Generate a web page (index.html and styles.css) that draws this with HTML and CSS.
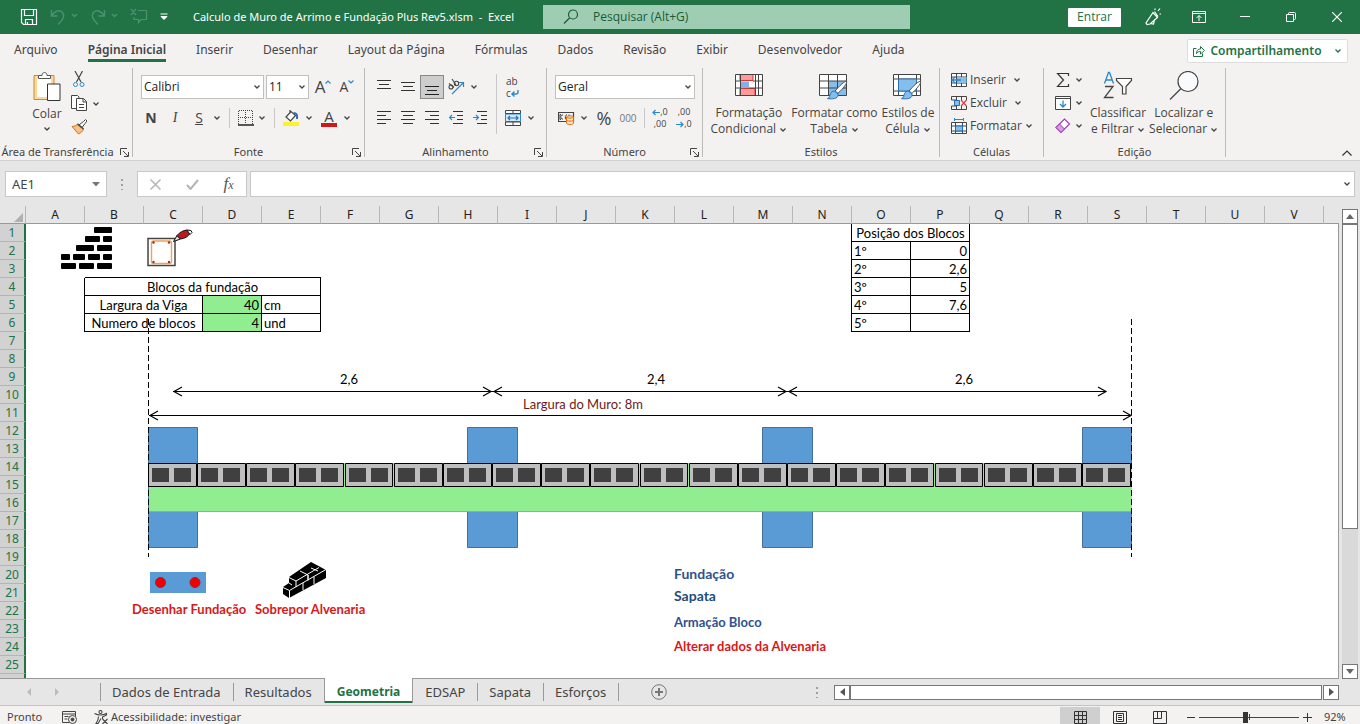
FILE: index.html
```html
<!DOCTYPE html>
<html lang="pt-BR">
<head>
<meta charset="utf-8">
<title>Calculo de Muro de Arrimo e Fundação Plus Rev5.xlsm - Excel</title>
<link rel="stylesheet" href="styles.css">
</head>
<body>
<svg class="defs" aria-hidden="true">
  <symbol id="chev" viewBox="0 0 8 6"><path d="M1.5 1.5 4 4l2.5-2.5" fill="none" stroke="currentColor" stroke-width="1.3"/></symbol>
  <symbol id="launch" viewBox="0 0 9 9"><path d="M.5 7V.5H7M3 3l5 5M8.500 4v4.500H4" fill="none" stroke="currentColor"/></symbol>
  <symbol id="brush" viewBox="0 0 24 22"><path d="M21.500 1.500c1.500 1-5 9-9 12.500l-3-2.500C14 6 20 .5 21.500 1.500z" fill="#fff" stroke="#444"/><path d="M8.500 11.500l4 3c1 4-3 6-11 5 3-1 2-3 3-5 1-2 2.500-3 4-3z" fill="#83beec" stroke="#1e6fb8"/></symbol>
  <symbol id="brick" viewBox="0 0 49 24"><path d="M.5.5h48v23H.5z" fill="#bfbfbf" stroke="#000"/><path d="M4 5h17v14H4zM26 5h17v14H26z" fill="#404040"/></symbol>
  <symbol id="brick-s" viewBox="0 0 48 24"><path d="M.5.5h47v23H.5z" fill="#bfbfbf" stroke="#000"/><path d="M4 5h17v14H4zM26 5h17v14H26z" fill="#404040"/></symbol>
</svg>

<header class="titlebar">
  <div class="quick">
    <button aria-label="Salvar"><svg width="18" height="18" viewBox="0 0 18 18" fill="none" stroke="#fff" stroke-width="1.200"><path d="M1.500 1.500h15v15h-13l-2-2zM4.500 1.500v6h9v-6M5.500 16.500v-5h7v5M7.500 14v2.500"/></svg></button>
    <button class="dim" aria-label="Desfazer"><svg width="28" height="18" viewBox="0 0 28 18" fill="none" stroke="currentColor" stroke-width="1.400"><path d="M1.500 2v6h6M1.500 8C4 3.500 9 1 12.500 4.500c3 3.500 1 7-4.500 12"/><path d="m22 6 2.500 2.500L27 6"/></svg></button>
    <button class="dim" aria-label="Refazer"><svg width="28" height="18" viewBox="0 0 28 18" fill="none" stroke="currentColor" stroke-width="1.400"><path d="M14.500 2v6h-6M14.500 8C12 3.500 7 1 3.500 4.500c-3 3.500-1 7 4.500 12"/><path d="m22 6 2.500 2.500L27 6"/></svg></button>
    <button class="dim" aria-label="Comentário"><svg width="18" height="18" viewBox="0 0 18 18" fill="none" stroke="currentColor" stroke-width="1.200"><path d="M1 1l5 6M6 1 1 7M8 2.500h8.500v9H11l-2.500 3v-3H4V9"/></svg></button>
    <button aria-label="Personalizar"><svg width="8" height="8" viewBox="0 0 8 8"><path d="M.5 1h7M1 3.500h6L4 6.500z" stroke="#fff" fill="#fff"/></svg></button>
  </div>
  <h1 class="doc">Calculo de Muro de Arrimo e Fundação Plus Rev5.xlsm&nbsp; -&nbsp; Excel</h1>
  <label class="search"><svg width="16" height="16" viewBox="0 0 16 16" fill="none" stroke="#185c37" stroke-width="1.200"><circle cx="10" cy="5.500" r="4.500"/><path d="M6.500 9 1 14.500"/></svg><input type="text" placeholder="Pesquisar (Alt+G)" aria-label="Pesquisar"></label>
  <div class="window-tools">
    <button class="signin">Entrar</button>
    <button aria-label="Novidades"><svg width="18" height="18" viewBox="0 0 18 18" fill="none" stroke="#fff" stroke-width="1.200"><path d="M9 4.500 2 15l1 1.500 3-.500 7.500-6.500zM6 15.500l3.500.5 1-4M10.500 3.500l3.500 5M11 2V.5M14 3l2-2.500M15.500 6H17"/></svg></button>
    <button aria-label="Opções da faixa de opções"><svg width="14" height="12" viewBox="0 0 14 12" fill="none" stroke="#fff"><path d="M.5.5h13v11H.5zM.5 2.500h13M7 10V4.500M4.500 7 7 4.500 9.500 7"/></svg></button>
    <button aria-label="Minimizar"><svg width="10" height="10" viewBox="0 0 10 10"><path d="M0 4.500h10" stroke="#fff"/></svg></button>
    <button aria-label="Restaurar"><svg width="10" height="10" viewBox="0 0 10 10" fill="none" stroke="#fff"><path d="M.5 2.500h7v7h-7zM2.500 2.500V1.500q0-1 1-1h5q1 0 1 1v5q0 1-1 1h-1"/></svg></button>
    <button aria-label="Fechar"><svg width="10" height="10" viewBox="0 0 10 10"><path d="m0 0 10 10M10 0 0 10" stroke="#fff" stroke-width="1.200"/></svg></button>
  </div>
</header>

<nav class="tabs">
  <a href="#">Arquivo</a><a href="#" class="on">Página Inicial</a><a href="#">Inserir</a><a href="#">Desenhar</a><a href="#">Layout da Página</a><a href="#">Fórmulas</a><a href="#">Dados</a><a href="#">Revisão</a><a href="#">Exibir</a><a href="#">Desenvolvedor</a><a href="#">Ajuda</a>
  <button class="share"><svg width="13" height="12" viewBox="0 0 13 12" fill="none" stroke="currentColor"><path d="M3.500 3.500h-3v8h9v-3M3.500 8.500c0-3 1.500-4.500 4-4.500V1.500l4 4-4 3.500V6.500c-2 0-3 .5-4 2z"/></svg><span>Compartilhamento</span><svg class="chev"><use href="#chev"/></svg></button>
</nav>

<main class="ribbon">
  <section class="group clipboard">
    <div class="body">
      <button class="big"><svg width="28" height="31" viewBox="0 0 28 31"><path d="M1 4.500h20v24H1z" fill="#ffd99b" stroke="#d8852a"/><path d="M4 7h14v19H4z" fill="#fff"/><path d="M5.500 7.500v-3h3.500c0-4 5-4 5 0h3.500v3z" fill="#fff" stroke="#555"/><path d="M14.500 13h12.500v16.500H14.500z" fill="#fff" stroke="#333"/></svg><span>Colar</span><svg class="chev"><use href="#chev"/></svg></button>
      <div class="stack">
        <button aria-label="Recortar"><svg width="16" height="17" viewBox="0 0 16 17" fill="none"><path d="M4 0l6 11M11.500 0l-6 11" stroke="#444" stroke-width="1.200"/><circle cx="4.500" cy="13.500" r="2" stroke="#2b88c8"/><circle cx="11" cy="13.500" r="2" stroke="#2b88c8"/></svg></button>
        <button aria-label="Copiar"><svg width="16" height="17" viewBox="0 0 16 17" fill="#fff" stroke="#444"><path d="M6 13.500H.5V.5h6l1.500 1.500V4"/><path d="M5.500 3.500h7l3 3v9h-10zM12 3.500v3.500h3.500M8 9.500h5M8 12.500h5"/></svg><svg class="chev"><use href="#chev"/></svg></button>
        <button aria-label="Pincel"><svg width="16" height="16" viewBox="0 0 16 16"><path d="m8 6 4.500-3.500L14.500.5 16 2l-2 2.500-3 4z" fill="#fff" stroke="#444"/><path d="M1 7.500c3 0 4-1 5.500-2.500l6 5.500c-1 2-2.500 3-5 4.500z" fill="#f6c087" stroke="#d8711a"/><path d="m6.500 5 6 5" stroke="#444" stroke-width="1.500"/></svg></button>
      </div>
    </div>
    <footer>Área de Transferência<svg class="launch"><use href="#launch"/></svg></footer>
  </section>

  <section class="group font">
    <div class="body rows">
      <div class="row">
        <span class="pick name"><select aria-label="Fonte"><option>Calibri</option></select><svg class="chev"><use href="#chev"/></svg></span>
        <span class="pick size"><select aria-label="Tamanho"><option>11</option></select><svg class="chev"><use href="#chev"/></svg></span>
        <button class="w24" aria-label="Aumentar fonte"><span class="a-big">A</span><svg class="hat" width="6" height="4" viewBox="0 0 6 4"><path d="M.5 3.500 3 1l2.500 2.500" fill="none" stroke="#2b88c8" stroke-width="1.200"/></svg></button>
        <button class="w24" aria-label="Diminuir fonte"><span class="a-small">A</span><svg class="hat" width="6" height="4" viewBox="0 0 6 4"><path d="M.5.5 3 3 5.500.5" fill="none" stroke="#2b88c8" stroke-width="1.200"/></svg></button>
      </div>
      <div class="row">
        <button class="w24"><b>N</b></button><button class="w24"><i>I</i></button><button class="w24"><u>S</u></button><button class="w12" aria-label="Mais"><svg class="chev"><use href="#chev"/></svg></button>
        <span class="sep"></span>
        <button class="w20" aria-label="Bordas"><svg width="16" height="16" viewBox="0 0 16 16"><path d="M.5 14V.5h14V14M7.500 0v14M0 7.500h15" fill="none" stroke="#444" stroke-dasharray="1 1"/><path d="M0 15h16" stroke="#222" stroke-width="1.500"/></svg></button><button class="w12" aria-label="Mais"><svg class="chev"><use href="#chev"/></svg></button>
        <span class="sep"></span>
        <button class="w20" aria-label="Cor de preenchimento"><svg width="16" height="18" viewBox="0 0 16 18"><path d="M3 8 8 2.500l4.500 4L7.500 12zM7 4.500V1" fill="#fff" stroke="#444" stroke-width="1.200"/><path d="M10.500 4c3 0 4 1.500 3.500 6" fill="none" stroke="#2b6fb8" stroke-width="2"/><path d="M0 13h16v4H0z" fill="#fbf328"/></svg></button><button class="w16" aria-label="Mais"><svg class="chev"><use href="#chev"/></svg></button>
        <button class="w24 fontcolor" aria-label="Cor da fonte"><span>A</span></button><button class="w12" aria-label="Mais"><svg class="chev"><use href="#chev"/></svg></button>
      </div>
    </div>
    <footer>Fonte<svg class="launch"><use href="#launch"/></svg></footer>
  </section>

  <section class="group align">
    <div class="body">
      <div class="rows">
        <div class="row">
          <button class="w24" aria-label="Alinhar acima"><svg width="14" height="20" viewBox="0 0 14 20" stroke="#333"><path d="M0 3.500h14M2 7.500h10M0 11.500h14"/></svg></button>
          <button class="w24" aria-label="Centralizar na vertical"><svg width="14" height="20" viewBox="0 0 14 20" stroke="#333"><path d="M0 5.500h14M2 9.500h10M0 13.500h14"/></svg></button>
          <button class="w24 pressed" aria-label="Alinhar embaixo"><svg width="14" height="20" viewBox="0 0 14 20" stroke="#222"><path d="M0 9.500h14M2 13.500h10M0 17.500h14"/></svg></button>
          <button class="w24" aria-label="Orientação"><svg width="18" height="18" viewBox="0 0 18 18" fill="none"><g stroke="#444" stroke-width="1.100"><circle cx="4" cy="9" r="2"/><path d="m2 5.500 5 4"/><circle cx="9.500" cy="5.500" r="2.200"/><path d="M5 1l4 6"/></g><path d="m5 16 11-11M12 4.500h4.500V9" stroke="#2b88c8" stroke-width="1.200"/></svg></button><button class="w12" aria-label="Mais"><svg class="chev"><use href="#chev"/></svg></button>
        </div>
        <div class="row">
          <button class="w24" aria-label="Esquerda"><svg width="14" height="14" viewBox="0 0 14 14" stroke="#333"><path d="M0 .5h14M0 4.500h9M0 8.500h14M0 12.500h9"/></svg></button>
          <button class="w24" aria-label="Centro"><svg width="14" height="14" viewBox="0 0 14 14" stroke="#333"><path d="M0 .5h14M2 4.500h10M0 8.500h14M2 12.500h10"/></svg></button>
          <button class="w24" aria-label="Direita"><svg width="14" height="14" viewBox="0 0 14 14" stroke="#333"><path d="M0 .5h14M5 4.500h9M0 8.500h14M5 12.500h9"/></svg></button>
          <button class="w24" aria-label="Diminuir recuo"><svg width="14" height="14" viewBox="0 0 14 14" fill="none" stroke="#333"><path d="M4 .5h10M8 4.500h6M8 8.500h6M4 12.500h10"/><path d="M6 6.500H.5M3 4 .5 6.500 3 9" stroke="#2b88c8" stroke-width="1.200"/></svg></button>
          <button class="w24" aria-label="Aumentar recuo"><svg width="14" height="14" viewBox="0 0 14 14" fill="none" stroke="#333"><path d="M4 .5h10M8 4.500h6M8 8.500h6M4 12.500h10"/><path d="M0 6.500h5.500M3 4l2.500 2.500L3 9" stroke="#2b88c8" stroke-width="1.200"/></svg></button>
        </div>
      </div>
      <span class="sep tall"></span>
      <div class="rows">
        <div class="row"><button class="w20 wrap" aria-label="Quebrar texto"><span>ab</span><span>c<svg width="8" height="7" viewBox="0 0 8 7"><path d="M7 0v2q0 2-2 2H1M3.500 1.500 1 4l2.500 2.500" fill="none" stroke="#2b88c8" stroke-width="1.400"/></svg></span></button></div>
        <div class="row"><button class="w20" aria-label="Mesclar"><svg width="16" height="16" viewBox="0 0 16 16" fill="none"><path d="M1 1h14v14H1z" fill="#fff"/><path d="M.5 4h15v7.500H.5z" fill="#d3e9f8" stroke="#2b88c8"/><path d="M.5.5h15v3H.5zM.5 12h15v3.500H.5zM8 .5v3M8 12v3.500" stroke="#444"/><path d="M3 8h10M5 6 3 8l2 2M11 6l2 2-2 2" stroke="#2b6fb8" stroke-width="1.200"/></svg></button><button class="w16" aria-label="Mais"><svg class="chev"><use href="#chev"/></svg></button></div>
      </div>
    </div>
    <footer>Alinhamento<svg class="launch"><use href="#launch"/></svg></footer>
  </section>

  <section class="group number">
    <div class="body rows">
      <div class="row"><span class="pick format"><select aria-label="Formato de número"><option>Geral</option></select><svg class="chev"><use href="#chev"/></svg></span></div>
      <div class="row">
        <button class="w24" aria-label="Formato contábil"><svg width="17" height="14" viewBox="0 0 17 14" fill="none"><path d="M.5 1.500h15v9H.5z" stroke="#444" stroke-width="1.200"/><path d="M5 4c-3-.5-3 4.500 0 4M9 3.500c-2 1-2 3-1 5M11 3.500v2M3 3.500H2v5h1" stroke="#444"/><path d="M8.500 6v6c0 2 7 2 7 0V6c0-1.500-7-1.500-7 0z" fill="#ffe2b8" stroke="#d8711a"/><path d="M8.500 6c0 1.500 7 1.500 7 0M8.500 9c0 1.500 7 1.500 7 0" stroke="#d8711a"/></svg></button><button class="w12" aria-label="Mais"><svg class="chev"><use href="#chev"/></svg></button>
        <button class="w28 pct">%</button><button class="w20 thousand">000</button>
        <span class="sep near"></span>
        <button class="w24 dec" aria-label="Aumentar casas decimais"><span><svg width="8" height="7" viewBox="0 0 8 7"><path d="M8 3.500H1M3.500 1 1 3.500 3.500 6" fill="none" stroke="#2b88c8" stroke-width="1.200"/></svg>,0</span><span>,00</span></button>
        <button class="w24 dec" aria-label="Diminuir casas decimais"><span>,00</span><span><svg width="8" height="7" viewBox="0 0 8 7"><path d="M0 3.500h7M4.500 1 7 3.500 4.500 6" fill="none" stroke="#2b88c8" stroke-width="1.200"/></svg>,0</span></button>
      </div>
    </div>
    <footer>Número<svg class="launch"><use href="#launch"/></svg></footer>
  </section>

  <section class="group styles">
    <div class="body">
      <button class="big"><svg width="28" height="30" viewBox="0 0 28 30"><path d="M.5 3.500h27v21H.5z" fill="#fff"/><path d="M5 3.500h13v6H5zM5 17.500h15v7H5z" fill="#ff9b9b" stroke="#d33"/><path d="M5 10.500h9v6.500H5z" fill="#7fb2e8"/><path d="M.5 3.500h27v21H.5zM.5 10h5M18 10h9.500M14 17h13.500M.5 17h5M5.500 3.500v21M20.500 3.500v21M23.500 3.500v21" fill="none" stroke="#444"/></svg><span>Formatação<br>Condicional <svg class="chev"><use href="#chev"/></svg></span></button>
      <button class="big"><svg width="30" height="30" viewBox="0 0 30 30"><path d="M.5 3.500h27v21H.5z" fill="#fff"/><path d="M9.500 10h18v14.500h-18z" fill="#83beec"/><path d="M.5 3.500h27v21H.5zM.5 10h27M.5 17h27M9.500 3.500v21M18.500 3.500v21" fill="none" stroke="#444"/><use href="#brush" x="7" y="9" width="23" height="21"/></svg><span>Formatar como<br>Tabela <svg class="chev"><use href="#chev"/></svg></span></button>
      <button class="big"><svg width="30" height="30" viewBox="0 0 30 30"><path d="M.5 3.500h27v21H.5z" fill="#fff"/><path d="M.5 3.500h27v21H.5zM.5 8h27M.5 20h27M5.500 3.500v21M23.500 3.500v21" fill="none" stroke="#444"/><path d="M5.500 8h18v12h-18z" fill="#83beec" stroke="#2b6fb8"/><use href="#brush" x="7" y="9" width="23" height="21"/></svg><span>Estilos de<br>Célula <svg class="chev"><use href="#chev"/></svg></span></button>
    </div>
    <footer>Estilos</footer>
  </section>

  <section class="group cells">
    <div class="body list">
      <button><svg width="16" height="14" viewBox="0 0 16 14" fill="none"><path d="M.5.5h15v13H.5zM.5 4h15M.5 10h15M5.500.5v13M10.500.5v13" fill="#fff" stroke="#444"/><path d="M6 4h9.500v6H6z" fill="#83beec"/><path d="M10 7H1M4 4 1 7l3 3" stroke="#2b88c8" stroke-width="1.400"/></svg><span>Inserir</span><svg class="chev far"><use href="#chev"/></svg></button>
      <button><svg width="16" height="14" viewBox="0 0 16 14" fill="none"><path d="M.5 4V.5h15V4M.5 10v3.500h15V10M.5 4H5M.5 10H5M5.500.5V4M10.500.5V4M5.500 10v3.500M10.500 10v3.500" stroke="#444"/><path d="M3.500 4.500h5v5h-5z" fill="#83beec" stroke="#1e6fb8"/><path d="m10 4 5.500 6M15.500 4 10 10" stroke="#e03c3c" stroke-width="1.200"/></svg><span>Excluir</span><svg class="chev far"><use href="#chev"/></svg></button>
      <button><svg width="16" height="16" viewBox="0 0 16 16" fill="none"><path d="M.5 4.500h15v11H.5zM.5 8h15M.5 13h15M4.500 4.500v11M11.500 4.500v11" fill="#fff" stroke="#444"/><path d="M4.500 8h7v5h-7z" fill="#83beec" stroke="#1e6fb8"/><path d="M3.500 0v3M12.500 0v3M4 1.500h8" stroke="#2b88c8"/></svg><span>Formatar</span><svg class="chev"><use href="#chev"/></svg></button>
    </div>
    <footer>Células</footer>
  </section>

  <section class="group editing">
    <div class="body">
      <div class="list">
        <button aria-label="Soma"><svg width="16" height="14" viewBox="0 0 16 14"><path d="M13.500 3V.500h-11L8.500 7l-6 6.500h11V11" fill="none" stroke="#333" stroke-width="1.200"/></svg><svg class="chev"><use href="#chev"/></svg></button>
        <button aria-label="Preencher"><svg width="16" height="14" viewBox="0 0 16 14"><path d="M.5.5h15v13H.5zM.5 2.500h15" fill="#fff" stroke="#444"/><path d="M8 4.500V11M5 8l3 3 3-3" fill="none" stroke="#2b88c8" stroke-width="1.300"/></svg><svg class="chev"><use href="#chev"/></svg></button>
        <button aria-label="Limpar"><svg width="16" height="16" viewBox="0 0 16 16"><path d="m1 9.500 8.500-8.500 5 5L6 14.500z" fill="#fff" stroke="#a03cb0" stroke-width="1.200"/><path d="M1 9.500 4.500 6l5 5L6 14.500z" fill="#d69be0" stroke="#a03cb0"/></svg><svg class="chev"><use href="#chev"/></svg></button>
      </div>
      <button class="big"><svg width="30" height="30" viewBox="0 0 30 30" fill="none"><path d="m1.500 12.500 4-11h1l4 11M3 9h6" stroke="#2b88c8" stroke-width="1.300"/><path d="M2 15.500h8L1.500 26.500H10.500" stroke="#444" stroke-width="1.300"/><path d="M13.500 7.500h15v2l-5.500 6v7.500h-3.500V15.500l-6-6z" fill="#fff" stroke="#444" stroke-width="1.200"/></svg><span>Classificar<br>e Filtrar <svg class="chev"><use href="#chev"/></svg></span></button>
      <button class="big"><svg width="30" height="30" viewBox="0 0 30 30"><circle cx="19" cy="10.500" r="10" fill="#f8fafc" stroke="#444" stroke-width="1.200"/><path d="M12 17.500 1 28.500" stroke="#444" stroke-width="1.200"/></svg><span>Localizar e<br>Selecionar <svg class="chev"><use href="#chev"/></svg></span></button>
    </div>
    <footer>Edição</footer>
  </section>
  <button class="collapse" aria-label="Recolher"><svg width="10" height="6" viewBox="0 0 10 6"><path d="M.5 5.500 5 1l4.500 4.500" fill="none" stroke="#333" stroke-width="1.200"/></svg></button>
</main>

<div class="formula">
  <label class="namebox"><input type="text" value="AE1" aria-label="Caixa de nome"><svg width="8" height="5" viewBox="0 0 8 5"><path d="M0 0h8L4 4.500z" fill="#777"/></svg></label>
  <span class="dots"></span>
  <div class="fx">
    <button aria-label="Cancelar"><svg width="11" height="11" viewBox="0 0 11 11"><path d="m.5.5 10 10M10.500.5l-10 10" stroke="#b5b5b5" stroke-width="1.500"/></svg></button>
    <button aria-label="Inserir"><svg width="13" height="11" viewBox="0 0 13 11"><path d="m1 6 3.500 4L12 1" fill="none" stroke="#b5b5b5" stroke-width="2"/></svg></button>
    <button class="fn" aria-label="Inserir função"><i>f<small>x</small></i></button>
  </div>
  <label class="entry"><input type="text" aria-label="Barra de fórmulas"><svg class="chev"><use href="#chev"/></svg></label>
</div>

<div class="workspace">
  <div class="grid">
    <table>
      <colgroup><col class="rh"><col span="22" class="c"><col></colgroup>
      <thead><tr><th class="corner"><svg width="9" height="9" viewBox="0 0 9 9"><path d="M9 0v9H0z" fill="#b0b0b0"/></svg></th><th>A</th><th>B</th><th>C</th><th>D</th><th>E</th><th>F</th><th>G</th><th>H</th><th>I</th><th>J</th><th>K</th><th>L</th><th>M</th><th>N</th><th>O</th><th>P</th><th>Q</th><th>R</th><th>S</th><th>T</th><th>U</th><th>V</th><th class="last"></th></tr></thead>
      <tbody>
        <tr><th>1</th><td colspan="14" class="r"></td><td colspan="2" class="k mid">Posição dos Blocos</td><td colspan="7"></td></tr>
        <tr><th>2</th><td colspan="14" class="r"></td><td class="k">1º</td><td class="k num">0</td><td colspan="7"></td></tr>
        <tr><th>3</th><td></td><td colspan="4" class="b"></td><td colspan="9" class="r"></td><td class="k">2º</td><td class="k num">2,6</td><td colspan="7"></td></tr>
        <tr><th>4</th><td class="r"></td><td colspan="4" class="k mid">Blocos da fundação</td><td colspan="9" class="r"></td><td class="k">3º</td><td class="k num">5</td><td colspan="7"></td></tr>
        <tr><th>5</th><td class="r"></td><td colspan="2" class="k mid">Largura da Viga</td><td class="k num in">40</td><td class="k">cm</td><td colspan="9" class="r"></td><td class="k">4º</td><td class="k num">7,6</td><td colspan="7"></td></tr>
        <tr><th>6</th><td class="r"></td><td colspan="2" class="k mid">Numero de blocos</td><td class="k num in">4</td><td class="k">und</td><td colspan="9" class="r"></td><td class="k">5º</td><td class="k num"></td><td colspan="7"></td></tr>
        <tr><th>7</th><td colspan="23"></td></tr>
        <tr><th>8</th><td colspan="23"></td></tr>
        <tr><th>9</th><td colspan="23"></td></tr>
        <tr><th>10</th><td colspan="23"></td></tr>
        <tr><th>11</th><td colspan="23"></td></tr>
        <tr><th>12</th><td colspan="23"></td></tr>
        <tr><th>13</th><td colspan="23"></td></tr>
        <tr><th>14</th><td colspan="23"></td></tr>
        <tr><th>15</th><td colspan="23"></td></tr>
        <tr><th>16</th><td colspan="23"></td></tr>
        <tr><th>17</th><td colspan="23"></td></tr>
        <tr><th>18</th><td colspan="23"></td></tr>
        <tr><th>19</th><td colspan="23"></td></tr>
        <tr><th>20</th><td colspan="23"></td></tr>
        <tr><th>21</th><td colspan="23"></td></tr>
        <tr><th>22</th><td colspan="23"></td></tr>
        <tr><th>23</th><td colspan="23"></td></tr>
        <tr><th>24</th><td colspan="23"></td></tr>
        <tr><th>25</th><td colspan="23"></td></tr>
        <tr><th></th><td colspan="23"></td></tr>
      </tbody>
    </table>

    <svg class="drawing wall" width="51" height="42" viewBox="0 0 51 42"><g><rect x="33" width="18" height="6" rx="1"/><rect x="24" y="9" width="15" height="6" rx="1"/><rect x="42" y="9" width="9" height="6" rx="1"/><rect x="15" y="18" width="18" height="6" rx="1"/><rect x="36" y="18" width="15" height="6" rx="1"/><rect y="27" width="9" height="6" rx="1"/><rect x="12" y="27" width="12" height="6" rx="1"/><rect x="27" y="27" width="12" height="6" rx="1"/><rect x="42" y="27" width="9" height="6" rx="1"/><rect y="36" width="15" height="6" rx="1"/><rect x="18" y="36" width="15" height="6" rx="1"/><rect x="36" y="36" width="15" height="6" rx="1"/></g></svg>
    <svg class="drawing pillar" width="46" height="38" viewBox="0 0 46 38"><rect x="1" y="9.500" width="27" height="27" fill="#fff" stroke="#444" stroke-width="1.500"/><rect x="4.500" y="12" width="20" height="22.500" rx="2" fill="none" stroke="#f0a060" stroke-width="1.400"/><g fill="#a03018"><circle cx="6.500" cy="13.500" r="1.200"/><circle cx="22" cy="13.500" r="1.200"/><circle cx="6.500" cy="33" r="1.200"/><circle cx="22" cy="33" r="1.200"/></g><path d="M26.500 12.500 30 6.500 33.500 10z" fill="#ddd" stroke="#111"/><path d="M30 6.500C33 3 36 1.500 40 1l3 3.500c-2 3-5 5-9.500 5.500z" fill="#c01820" stroke="#111"/><path d="m40 1 4 .5 1 2-2 2z" fill="#fff" stroke="#111"/></svg>

    <svg class="drawing plan" width="1000" height="244" viewBox="140 316 1000 244">
      <g fill="#5b9bd5" stroke="#41719c"><path d="M148.500 427.500h49v120h-49zM467.500 427.500h50v120h-50zM762.500 427.500h50v120h-50zM1082.500 427.500h49v120h-49z"/></g>
      <path d="M149 463h983v48H149z" fill="#90ee90"/><path d="M149 511.500h983" stroke="#8fb08f"/>
      <use href="#brick" x="148" y="463" width="49" height="24"/><use href="#brick" x="197" y="463" width="49" height="24"/><use href="#brick" x="246" y="463" width="49" height="24"/><use href="#brick" x="295" y="463" width="49" height="24"/><use href="#brick-s" x="345" y="463" width="48" height="24"/><use href="#brick" x="394" y="463" width="49" height="24"/><use href="#brick" x="443" y="463" width="49" height="24"/><use href="#brick" x="492" y="463" width="49" height="24"/><use href="#brick" x="541" y="463" width="49" height="24"/><use href="#brick" x="590" y="463" width="49" height="24"/><use href="#brick-s" x="640" y="463" width="48" height="24"/><use href="#brick" x="689" y="463" width="49" height="24"/><use href="#brick" x="738" y="463" width="49" height="24"/><use href="#brick" x="787" y="463" width="49" height="24"/><use href="#brick" x="836" y="463" width="49" height="24"/><use href="#brick" x="885" y="463" width="49" height="24"/><use href="#brick-s" x="935" y="463" width="48" height="24"/><use href="#brick" x="984" y="463" width="49" height="24"/><use href="#brick" x="1033" y="463" width="49" height="24"/><use href="#brick" x="1082" y="463" width="49" height="24"/>
      <g fill="none" stroke="#000"><path d="M148.500 319v238M1131.500 319v238" stroke-dasharray="6 3"/>
      <path d="M173 391.500h933M149 415.500h982"/>
      <path d="M182 387l-8 4.500 8 4.500M483 387l8 4.500-8 4.500M502 387l-8 4.500 8 4.500M778 387l8 4.500-8 4.500M797 387l-8 4.500 8 4.500M1098 387l8 4.500-8 4.500M158 411l-8 4.500 8 4.500M1123 411l8 4.500-8 4.500" stroke-width="1.200"/></g>
      <g class="dim-text"><text x="349" y="384">2,6</text><text x="656" y="384">2,4</text><text x="964" y="384">2,6</text><text class="total" x="583" y="409">Largura do Muro: 8m</text></g>
    </svg>

    <svg class="drawing beam" width="56" height="21" viewBox="0 0 56 21"><path d="M0 0h56v21H0z" fill="#5b9bd5"/><circle cx="10.500" cy="10.500" r="5" fill="#f00000" stroke="#a02030"/><circle cx="45" cy="10.500" r="5" fill="#f00000" stroke="#a02030"/></svg>
    <svg class="drawing masonry" width="44" height="36" viewBox="0 0 44 36"><path d="M0 25 6 21V15L28 0 43 8v8L6 36 0 32z"/><path d="M0 25.500 6.500 28.500V36M6.500 28.500 43 7.500M6 15.500 13 19v6M13 19 36 5.500M6 21l3 2M17 9l8 4v5.500M20 21v7M31 14.500V22M25 13v5M28 6l7 3" fill="none" stroke="#fff"/></svg>
    <button class="drawing macro m-fund">Desenhar Fundação</button>
    <button class="drawing macro m-alv">Sobrepor Alvenaria</button>
    <button class="drawing macro m-1">Fundação</button>
    <button class="drawing macro m-2">Sapata</button>
    <button class="drawing macro m-3">Armação Bloco</button>
    <button class="drawing macro m-4">Alterar dados da Alvenaria</button>
  </div>
  <div class="vbar"><button aria-label="Acima"><svg width="8" height="5" viewBox="0 0 8 5"><path d="M0 5h8L4 0z" fill="#666"/></svg></button><div class="thumb"></div><div class="track"></div><button aria-label="Abaixo"><svg width="8" height="5" viewBox="0 0 8 5"><path d="M0 0h8L4 5z" fill="#666"/></svg></button></div>
</div>

<nav class="sheets">
  <div class="arrows"><svg width="6" height="8" viewBox="0 0 6 8"><path d="M5 0v8L1 4z" fill="#bbb"/></svg><svg width="6" height="8" viewBox="0 0 6 8"><path d="M1 0v8l4-4z" fill="#bbb"/></svg></div>
  <a href="#">Dados de Entrada</a><a href="#">Resultados</a><a href="#" class="on">Geometria</a><a href="#">EDSAP</a><a href="#">Sapata</a><a href="#">Esforços</a>
  <span class="end"></span>
  <button class="add" aria-label="Nova planilha"><svg width="16" height="16" viewBox="0 0 16 16"><circle cx="8" cy="8" r="7.300" fill="none" stroke="#777"/><path d="M8 4v8M4 8h8" stroke="#777" stroke-width="2"/></svg></button>
  <div class="hbar"><span class="dots"></span><button aria-label="Esquerda"><svg width="5" height="8" viewBox="0 0 5 8"><path d="M5 0v8L0 4z" fill="#555"/></svg></button><div class="hthumb"></div><button aria-label="Direita"><svg width="5" height="8" viewBox="0 0 5 8"><path d="M0 0v8l5-4z" fill="#555"/></svg></button></div>
</nav>

<footer class="status">
  <span>Pronto</span>
  <svg width="15" height="13" viewBox="0 0 15 13" fill="none" stroke="#444"><path d="M7 11.500H.5V.5h13V5M.5 3h13M2.500 5.500h4M2.500 8h3"/><circle cx="10.500" cy="8.500" r="4"/><circle cx="10.500" cy="8.500" r="1.500" fill="#444"/></svg>
  <span class="access"><svg width="15" height="15" viewBox="0 0 15 15" fill="none" stroke="#444" stroke-width="1.100"><circle cx="6.500" cy="2" r="1.500"/><path d="M.5 3.500c4 2 8 2 12 0v1.500L8.500 7v2M4.500 6.500c0 3-1 5-2.500 7h2l3-5M8.500 9l5 5M13.500 9l-5 5"/></svg>Acessibilidade: investigar</span>
  <div class="views">
    <button class="on" aria-label="Normal"><svg width="13" height="13" viewBox="0 0 13 13" fill="none" stroke="#333"><path d="M.5.5h12v12H.5zM.5 4.500h12M.5 8.500h12M4.500.5v12M8.500.5v12"/></svg></button>
    <button aria-label="Layout da Página"><svg width="14" height="13" viewBox="0 0 14 13" fill="none" stroke="#333"><path d="M.5.5h13v12H.5zM3.500 2.500h7v8h-7zM5 4.500h4M5 6.500h4M5 8.500h4"/></svg></button>
    <button aria-label="Quebra de página"><svg width="14" height="13" viewBox="0 0 14 13" fill="none" stroke="#333"><path d="M.5.5h13v12H.5zM4.500.5v7M8.500.5v7H.5"/></svg></button>
  </div>
  <button class="zoom-step" aria-label="Reduzir"><svg width="9" height="9" viewBox="0 0 9 9"><path d="M0 4.500h8" stroke="#333"/></svg></button>
  <input type="range" min="0" max="100" value="46" aria-label="Zoom">
  <button class="zoom-step" aria-label="Ampliar"><svg width="9" height="9" viewBox="0 0 9 9"><path d="M0 4.500h9M4.500 0v9" stroke="#333"/></svg></button>
  <span class="pc">92%</span>
</footer>
</body>
</html>
```

FILE: styles.css
```css
* { box-sizing: border-box; }
body {
  margin: 0;
  height: 100vh;
  display: flex;
  flex-direction: column;
  overflow: hidden;
  background: #e6e6e6;
  color: #444;
  font: 12px/16px "Noto Sans", "Open Sans", sans-serif;
}
button, input, select { font: inherit; color: inherit; margin: 0; }
button { background: none; border: 0; padding: 0; display: inline-flex; align-items: center; justify-content: center; white-space: nowrap; }
a { color: inherit; text-decoration: none; }
svg { display: block; flex: none; }
.defs { position: absolute; width: 0; height: 0; }
.chev { width: 8px; height: 6px; }

.titlebar { display: flex; align-items: center; height: 34px; background: #217346; color: #fff; flex: none; font-family: "Open Sans", sans-serif; }
.quick { display: flex; align-items: center; gap: 12px; width: 193px; padding-left: 20px; flex: none; }
.dim { color: #4e9170; }
.doc { margin: 0; font: 11px/16px "Noto Sans", sans-serif; width: 350px; white-space: nowrap; }
.search { flex: 0 1 367px; height: 24px; display: flex; align-items: center; gap: 14px; padding-left: 20px; background: #9fcdb3; color: #185c37; }
.search input { flex: 1; min-width: 0; border: 0; padding: 0; background: none; outline: 0; }
.search input::placeholder { color: #185c37; opacity: 1; }
.window-tools { margin-left: auto; display: flex; align-items: center; }
.window-tools button { width: 46px; height: 32px; }
.window-tools .signin { width: 53px; height: 19px; margin-right: 9px; background: #fff; color: #217346; border-radius: 1px; }

.tabs { flex: none; height: 33px; display: flex; align-items: center; gap: 30px; padding: 0 12px 0 14px; background: #f3f2f1; }
.tabs a { align-self: flex-start; line-height: 18px; padding-top: 7px; border-bottom: 3px solid transparent; white-space: nowrap; }
.tabs .on { font-weight: 600; border-color: #217346; }
.share { margin-left: auto; width: 161px; height: 24px; gap: 4px; background: #fff; border: 1px solid #ddd; border-radius: 2px; color: #217346; font-weight: 600; }
.share .chev { margin-left: 8px; }

.ribbon { flex: none; height: 94px; display: flex; background: #f3f2f1; border-bottom: 1px solid #cfcfcf; font-family: "Open Sans", sans-serif; }
.group { flex: none; display: flex; flex-direction: column; margin: 1px 0 3px; border-right: 1px solid #bbb; }
.group footer { position: relative; font: 11px/10px "Noto Sans", sans-serif; height: 10px; text-align: center; white-space: nowrap; }
.launch { position: absolute; right: 3px; top: 1px; width: 9px; height: 9px; }
.body { flex: 1; display: flex; }
.rows { display: flex; flex-direction: column; gap: 7px; padding-top: 7px; }
.row { display: flex; align-items: center; height: 24px; }
.w12 { width: 12px; } .w16 { width: 16px; } .w20 { width: 20px; } .w24 { width: 24px; } .w28 { width: 28px; }
.row button { height: 24px; }
.sep { width: 1px; height: 20px; margin: 0 6px; background: #c8c8c8; }
.sep.tall { height: 60px; margin: 6px 6px 0 4px; }
.sep.near { margin-right: 3px; }
.big { flex-direction: column; justify-content: flex-start; padding-top: 3px; gap: 4px; line-height: 16px; }
.big span .chev { display: inline-block; }
.clipboard { width: 133px; }
.clipboard .big { width: 36px; margin-left: 29px; }
.clipboard footer { padding-right: 17px; }
.stack { display: flex; flex-direction: column; gap: 7px; padding: 3px 0 0 6px; align-items: flex-start; }
.stack .chev { margin-left: 5px; }
.font { width: 232px; }
.font .row { padding-left: 6px; }
.font .row:first-child { padding-left: 8px; }
.pick { display: grid; align-items: center; height: 24px; background: #fff; border: 1px solid #c0c0c0; }
.pick select { grid-area: 1 / 1; appearance: none; border: 0; background: none; padding: 0 2px; width: 100%; height: 22px; color: #222; }
.pick .chev { grid-area: 1 / 1; justify-self: end; margin-right: 2px; pointer-events: none; }
.name { width: 123px; margin-right: 2px; }
.size { width: 43px; margin-right: 2px; }
.format { width: 140px; }
.a-big { font-size: 17px; }
.a-small { font-size: 14px; }
.hat { align-self: flex-start; margin-top: 5px; }
.row b, .row i, .row u { font-size: 14px; }
.row i { font-family: "Liberation Serif", serif; }
.fontcolor span { font-size: 15px; line-height: 14px; border-bottom: 4px solid #d01818; padding: 0 3px; }
.align { width: 182px; }
.align .body { padding-left: 7px; }
.pressed { background: #cdcdcd; border: 1px solid #888; }
.wrap { flex-direction: column; font-size: 10px; line-height: 12px; }
.wrap span { display: flex; align-items: center; width: 14px; }
.number { width: 156px; }
.number .row { padding-left: 8px; }
.number .row + .row { padding-left: 7px; }
.pct { font-size: 18px; }
.thousand { font-size: 10px; color: #777; }
.dec { flex-direction: column; font-size: 9px; line-height: 12px; }
.dec span { display: flex; align-items: center; }
.styles { width: 237px; }
.styles .body { justify-content: center; gap: 4px; padding-left: 3px; }
.cells { width: 104px; }
.list { display: flex; flex-direction: column; align-items: flex-start; padding-left: 11px; }
.list button { height: 23px; gap: 4px; }
.cells .list button { gap: 3px; }
.list .far { margin-left: 4px; }
.editing { width: 182px; }
.editing .body { gap: 3px; }
.editing .list { width: 43px; }
.collapse { margin: auto 8px 4px auto; }

.formula { flex: none; display: flex; align-items: flex-start; height: 45px; padding: 10px 5px 0; background: #e6e6e6; }
.namebox, .fx, .entry { display: flex; align-items: center; height: 26px; background: #fff; border: 1px solid #c8c8c8; }
.formula input { border: 0; padding: 0; background: none; outline: 0; flex: 1; min-width: 0; font-size: 13px; }
.namebox { width: 102px; padding: 0 6px; }
.dots { width: 2px; height: 11px; margin: 8px 14px 0; background: repeating-linear-gradient(#a0a0a0 0 2px, transparent 2px 5px); }
.fx { width: 110px; justify-content: space-around; }
.fn { font: 17px/20px "Liberation Serif", serif; color: #555; }
.fn small { font-size: 12px; }
.entry { flex: 1; margin-left: 3px; padding-right: 3px; }

.workspace { flex: 1; min-height: 0; display: flex; }
.grid { position: relative; flex: 1; min-width: 0; overflow: hidden; border-bottom: 1px solid #999; }
table { width: 100%; table-layout: fixed; border-collapse: separate; border-spacing: 0; color: #000; font: 13px/16px Lato, "Noto Sans", sans-serif; }
.rh { width: 26px; }
.c { width: 59px; }
th, td { height: 18px; padding: 0 2px; line-height: 16px; white-space: nowrap; }
th { font-weight: 400; font-family: "Noto Sans", sans-serif; font-size: 12px; padding: 0; text-align: center; }
thead th { color: #222; border-bottom: 1px solid #999; border-right: 1px solid #b8b8b8; background: #e6e6e6; }
thead .last { border-right: 0; }
.corner svg { margin: 5px 2px 0 auto; }
tbody th { background: #d2d2d2; color: #217346; border-bottom: 1px solid #b4b4b4; border-right: 2px solid #217346; }
td { background: #fff; }
td:last-child { border-right: 1px solid #999; }
td.r { border-right: 1px solid #000; }
td.b { border-bottom: 1px solid #000; }
td.k { border: solid #000; border-width: 0 1px 1px 0; }
.mid { text-align: center; }
.num { text-align: right; }
td.in { background: #90ee90; }

.drawing { position: absolute; }
.wall { left: 61px; top: 21px; }
.pillar { left: 147px; top: 23px; }
.plan { left: 140px; top: 110px; }
.beam { left: 150px; top: 366px; }
.masonry { left: 283px; top: 356px; }
.dim-text { font: 13px Lato, sans-serif; text-anchor: middle; fill: #000; }
.total { fill: #701818; }
.macro { font: 700 13px/16px Lato, sans-serif; color: #2f528f; }
.m-fund { left: 132px; top: 395px; color: #d81818; }
.m-alv { left: 255px; top: 395px; color: #d81818; }
.m-1 { left: 674px; top: 360px; font-size: 14px; }
.m-2 { left: 674px; top: 382px; font-size: 14px; color: #1f4e79; }
.m-3 { left: 674px; top: 408px; }
.m-4 { left: 674px; top: 432px; color: #d81818; }

.vbar { width: 21px; padding: 3px 2px 0 3px; display: flex; flex-direction: column; }
.vbar button, .hbar button { width: 16px; height: 15px; background: #fff; border: 1px solid #777; flex: none; }
.thumb { flex: 306; background: #fff; border: 1px solid #777; }
.track { flex: 136; background: #d9d9d9; }

.sheets { flex: none; height: 27px; display: flex; align-items: stretch; border-bottom: 1px solid #c4c4c4; font-size: 13px; }
.arrows { width: 100px; display: flex; gap: 22px; padding: 0 0 0 26px; align-items: center; }
.sheets a { display: flex; align-items: center; justify-content: center; padding: 0 12px; position: relative; }
.sheets a::before { content: ""; position: absolute; left: 0; top: 4px; bottom: 4px; width: 1px; background: #999; }
.sheets .on { background: #fff; color: #217346; font-size: 12px; font-weight: 700; border: 1px solid #999; border-width: 0 1px; box-shadow: inset 0 -2px #217346; margin-bottom: 2px; margin-top: -1px; padding-top: 2px; }
.sheets .on::before, .sheets .on + a::before { display: none; }
.end { width: 1px; margin: 4px 0; background: #999; }
.add { margin-left: 32px; }
.hbar { margin-left: auto; flex: 0 1 544px; display: flex; align-items: center; padding-right: 21px; }
.hbar .dots { margin: 0 16px 0 0; }
.hthumb { flex: 1; height: 15px; background: #fff; border: 1px solid #777; margin-right: 1px; }

.status { flex: none; height: 18px; display: flex; align-items: center; background: #f3f2f1; font-size: 11px; padding-left: 7px; overflow: hidden; padding-top: 4px; }
.status > svg { margin: 0 17px 0 20px; }
.access { display: flex; align-items: center; gap: 2px; }
.views { margin: -2px 3px 0 auto; display: flex; }
.views button { width: 40px; height: 18px; padding-top: 2px; }
.views .on { background: #cfcfcf; }
.zoom-step { width: 16px; }
.status input { appearance: none; width: 100px; height: 12px; background: linear-gradient(#444, #444) 0 6px / 100% 1px no-repeat, linear-gradient(#444, #444) 50px 3px / 1px 6px no-repeat; }
.status input::-webkit-slider-thumb { appearance: none; width: 5px; height: 11px; background: #333; }
.pc { width: 45px; padding-left: 9px; }
```
